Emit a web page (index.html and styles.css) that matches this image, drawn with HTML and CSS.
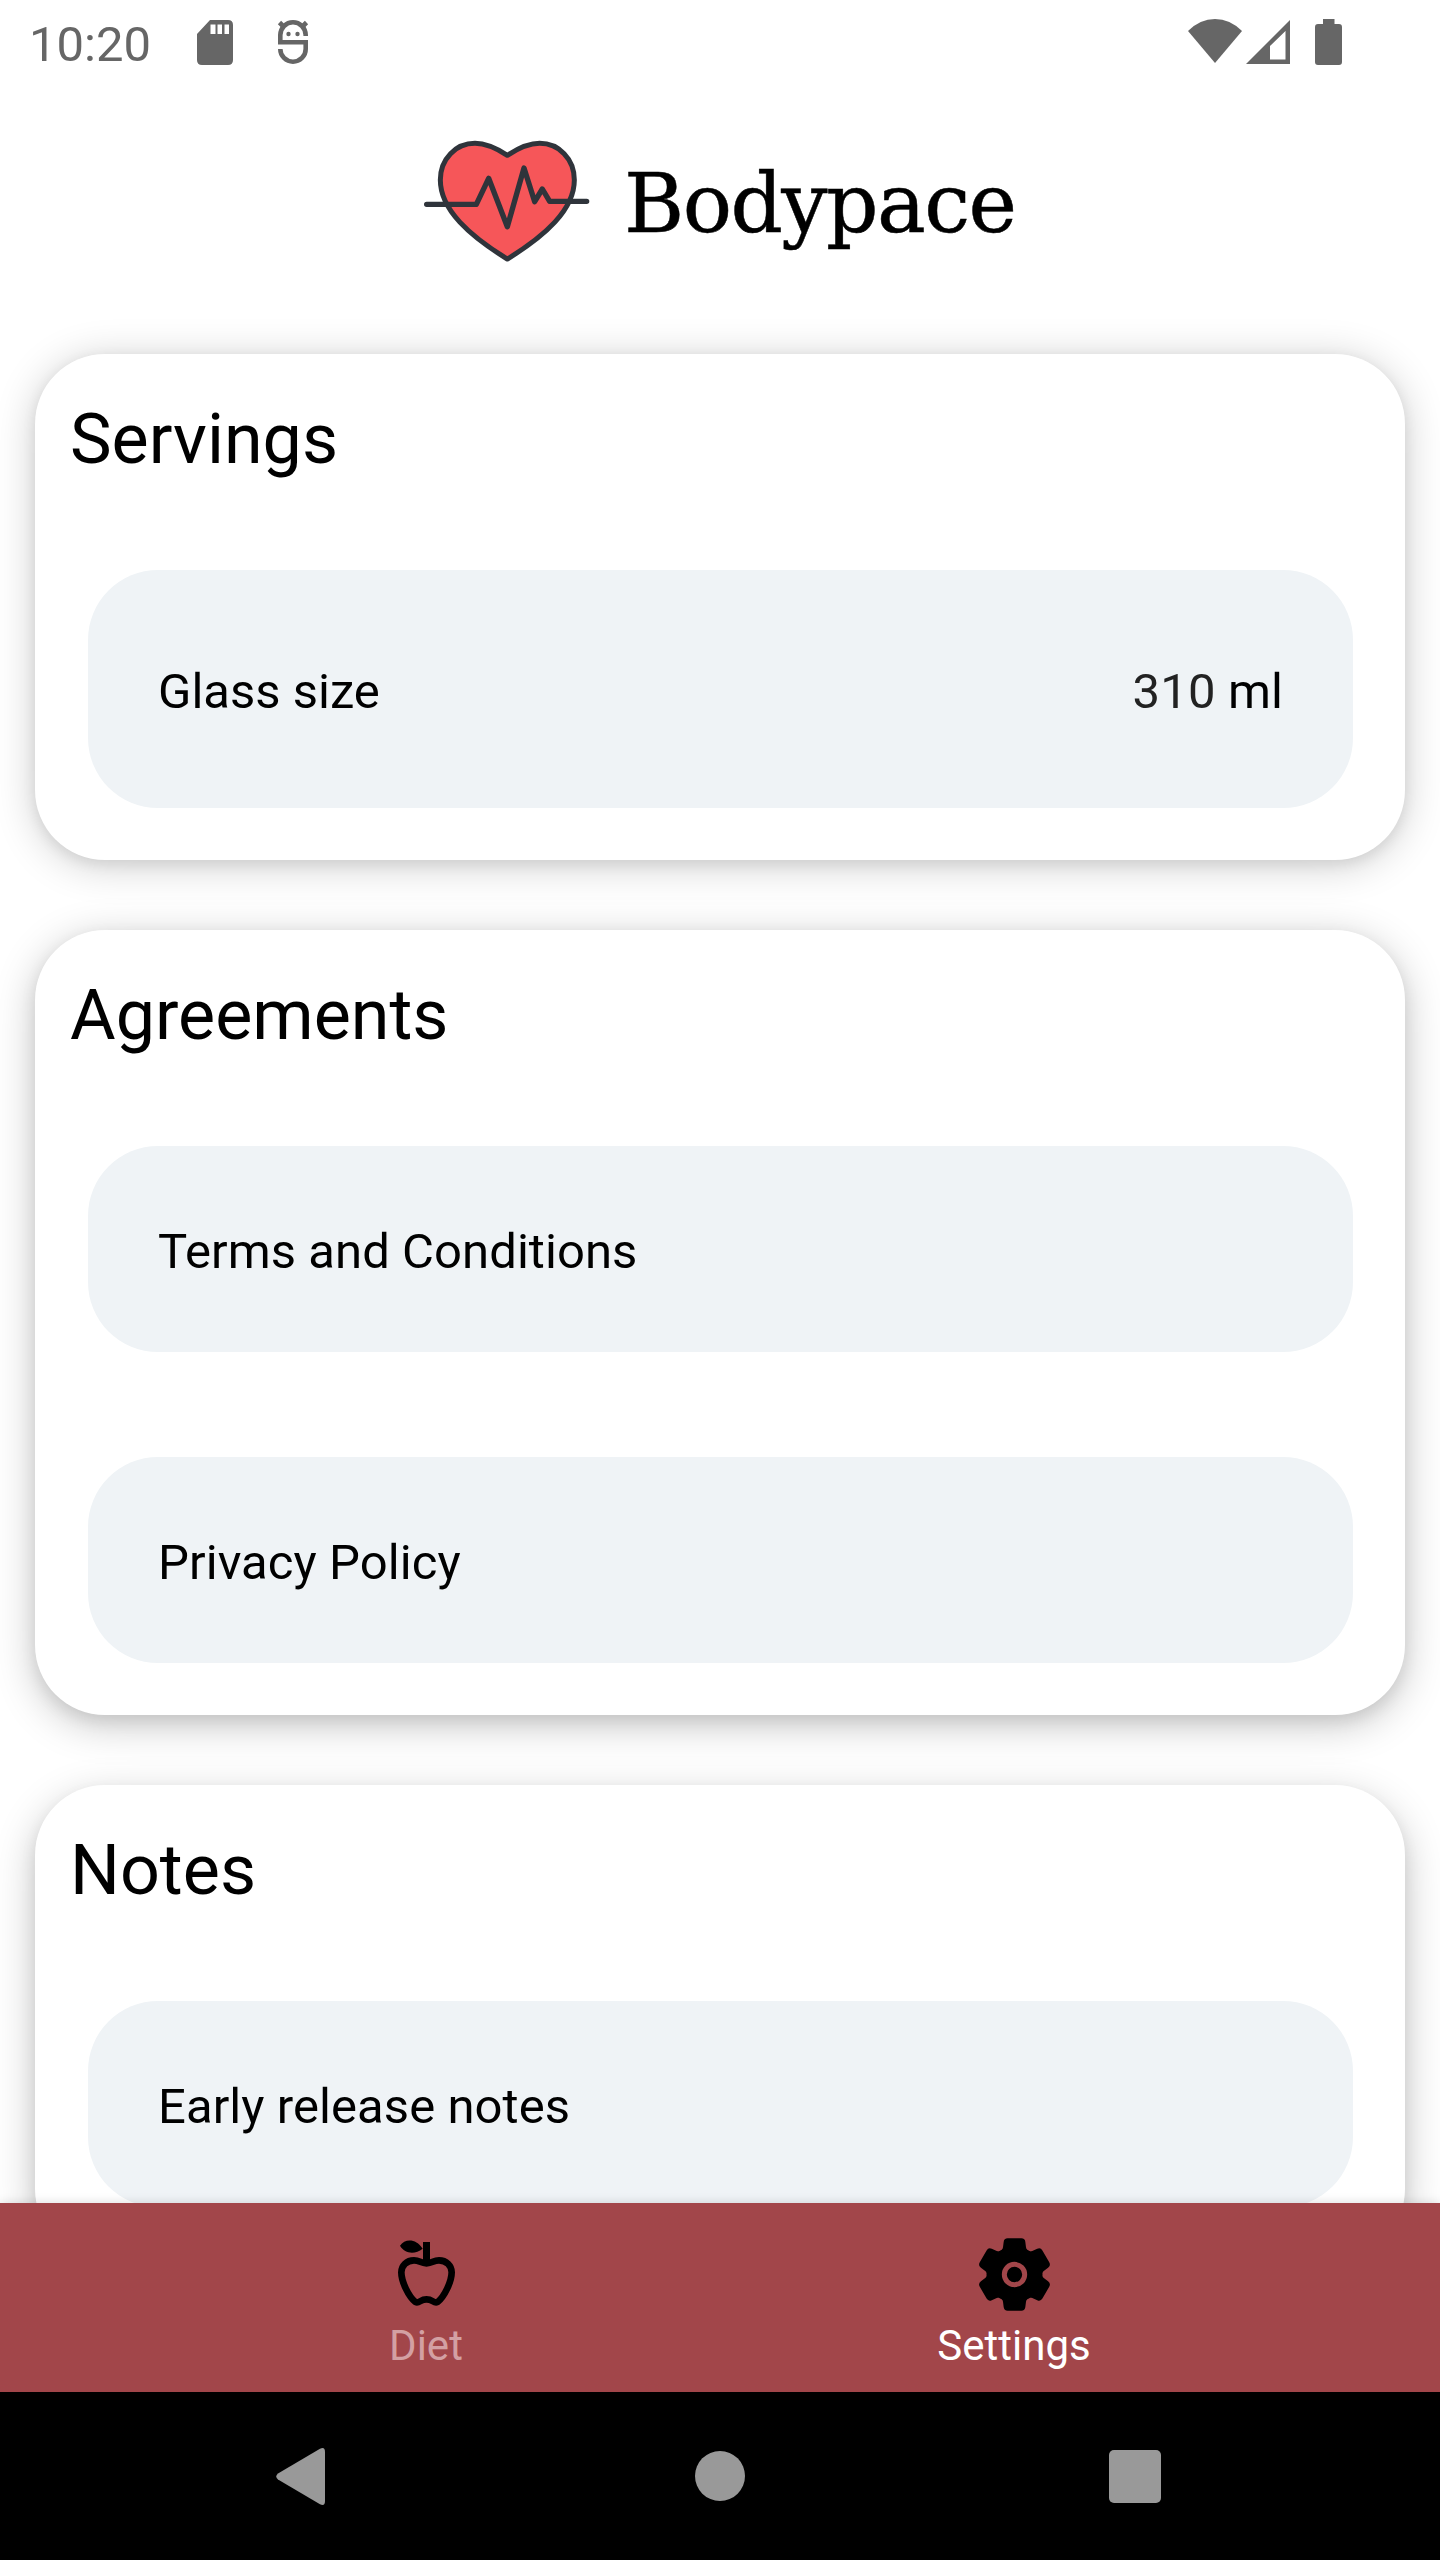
FILE: index.html
```html
<!DOCTYPE html>
<html lang="en">
<head>
<meta charset="utf-8">
<title>Bodypace</title>
<link rel="stylesheet" href="styles.css">
</head>
<body>
<div class="screen">
  <header class="status">
    <span class="clock">10:20</span>
    <svg class="sd" viewBox="0 0 36 45"><path fill-rule="evenodd" d="M13 0H31Q36 0 36 5V40Q36 45 31 45H5Q0 45 0 40V14ZM13.500 4.500V14H18.500V4.500ZM20.500 4.500V14H25V4.500ZM27.500 4.500V14H32V4.500Z"/></svg>
    <svg class="bot" viewBox="0 0 32 45"><g fill="none" stroke="#666" stroke-width="4.600"><path d="M28.700 16V15A12.700 12.700 0 0 0 3.300 15V22.300H28.700V29A12.700 12.700 0 0 1 3.300 29"/><path d="M2.500 2.500L7 7M29.500 2.500L25 7"/></g><circle cx="11.500" cy="14" r="2.200"/><circle cx="20.500" cy="14" r="2.200"/></svg>
    <span class="spacer"></span>
    <svg class="wifi" viewBox="0 0 54 45"><path d="M0 12Q12 0 27 0T54 12L27 44Z"/></svg>
    <svg class="signal" viewBox="0 0 44 44"><path fill-rule="evenodd" d="M44 0V44H0ZM39.500 11L24 26V39.500H39.500Z"/></svg>
    <svg class="battery" viewBox="0 0 27 46"><path d="M8 0H19.500V5H24Q27 5 27 8V43Q27 46 24 46H3Q0 46 0 43V8Q0 5 3 5H8Z"/></svg>
  </header>
  <div class="brand">
    <svg class="heart" viewBox="36 24 504 378">
      <path class="heart-shape" d="M292 76C255 52 225 40 195 40C138 40 91 86 91 150C91 240 180 318 292 387C404 318 493 240 493 150C493 86 446 40 389 40C359 40 329 52 292 76Z"/>
      <path class="pulse" d="M50 223H199L236 145L292 290L342 114L374 215L397 177L419 214H530"></path>
    </svg>
    <h1 class="name">Bodypace</h1>
  </div>
  <main class="content">
    <section class="card">
      <h2>Servings</h2>
      <div class="item tall"><span>Glass size</span><span class="value"><span class="number">310</span> ml</span></div>
    </section>
    <section class="card middle">
      <h2>Agreements</h2>
      <div class="item">Terms and Conditions</div>
      <div class="item">Privacy Policy</div>
    </section>
    <section class="card low">
      <h2>Notes</h2>
      <div class="item">Early release notes</div>
    </section>
  </main>
  <nav class="tabs">
    <a class="tab">
      <svg class="tab-icon" viewBox="132 126 252 252">
        <path fill="none" stroke="#000" stroke-width="20" stroke-linejoin="round" d="M259.500 220C241 220 240 211 222 211C200 211 184 227 184 247C184 275 206 320 226 336C239 341 240 328 259.500 328C279 328 280 341 293 336C313 320 335 275 335 247C335 227 319 211 297 211C279 211 278 220 259.500 220Z"/>
        <path d="M249 156H270V220H249ZM180 167C195 145 228 145 248 176C225 194 195 192 180 167Z"/>
      </svg>
      Diet
    </a>
    <a class="tab active">
      <svg class="tab-icon" viewBox="216 126 252 252">
        <defs><path id="tooth" d="M306 205L296 184Q307 184 309 172L311 156Q312 145 323 145H364Q375 145 376 156L378 172Q380 184 391 184L381 205Z"/></defs>
        <circle cx="343.500" cy="253.500" r="84"/>
        <use href="#tooth"/>
        <use href="#tooth" transform="rotate(60 343.500 253.500)"/>
        <use href="#tooth" transform="rotate(120 343.500 253.500)"/>
        <use href="#tooth" transform="rotate(180 343.500 253.500)"/>
        <use href="#tooth" transform="rotate(240 343.500 253.500)"/>
        <use href="#tooth" transform="rotate(300 343.500 253.500)"/>
        <circle class="hub" cx="343.500" cy="253.500" r="30.500"/>
      </svg>
      Settings
    </a>
  </nav>
  <footer class="system">
    <svg class="back" viewBox="0 0 49 57"><path d="M44 .8Q49-1.500 49 4V53Q49 58.500 44 56.200L2 31.500Q-1.500 28.500 2 25.500Z"/></svg>
    <span class="home"></span>
    <span class="recents"></span>
  </footer>
</div>
</body>
</html>
```
FILE: styles.css
```css
* { box-sizing: border-box; }
body { margin: 0; background: #fff; font-family: Roboto, sans-serif; color: #000; }
.screen { width: 1440px; height: 2560px; display: flex; flex-direction: column; overflow: hidden; }
.status { height: 84px; display: flex; align-items: flex-start; padding: 19px 98px 0 29px; fill: #666; flex: none; }
.clock { font-size: 49px; line-height: 52px; color: #666; width: 168px; }
.sd { width: 36px; height: 45px; margin: 1px 44px 0 0; }
.bot { width: 32px; height: 45px; margin-top: 1px; }
.spacer { flex: 1; }
.wifi { width: 54px; height: 45px; margin-right: 4px; }
.signal { width: 44px; height: 44px; margin: 1px 25px 0 0; }
.battery { width: 27px; height: 46px; }
.brand { height: 270px; flex: none; display: flex; padding: 54px 0 0 422px; gap: 34px; }
.heart { width: 168px; height: 126px; }
.heart-shape { fill: #f65659; stroke: #2f343b; stroke-width: 15; stroke-linejoin: round; }
.pulse { fill: none; stroke: #2f343b; stroke-width: 16; stroke-linecap: round; stroke-linejoin: round; }
.name { margin: 0; font: 400 82px/132px "DejaVu Serif", serif; letter-spacing: -1.6px; -webkit-text-stroke: .5px #000; }
.content { flex: 1; min-height: 0; overflow: hidden; margin-top: -70px; padding: 70px 35px 0; display: flex; flex-direction: column; gap: 70px; }
.card { flex: none; border-radius: 70px; padding: 44px 52px 52px 53px; background: #fff; box-shadow: 0 5px 42px rgba(0,0,0,.2), 0 4px 14px rgba(0,0,0,.08); }
.middle { box-shadow: 0 9px 42px rgba(0,0,0,.23), 0 6px 16px rgba(0,0,0,.08); }
.low { box-shadow: 0 13px 42px rgba(0,0,0,.23), 0 8px 16px rgba(0,0,0,.08); }
h2 { margin: 0 0 90px -18px; font-size: 70px; line-height: 82px; font-weight: 400; }
.item { height: 206px; border-radius: 70px; background: #eff3f6; padding: 4px 70px 0; display: flex; align-items: center; justify-content: space-between; font-size: 49px; letter-spacing: .07px; }
.item + .item { margin-top: 105px; }
.tall { height: 238px; letter-spacing: 0; }
.value { white-space: pre; }
.number { color: #222; letter-spacing: .3px; }
.tabs { height: 189px; flex: none; background: #a2464a; display: flex; padding: 0 132px; position: relative; box-shadow: 0 0 10px rgba(0,0,0,.14); }
.tab { flex: 1; display: flex; flex-direction: column; align-items: center; padding-top: 29px; color: #d3a0a3; font-size: 42px; line-height: 60px; }
.tab-icon { width: 84px; height: 84px; fill: #000; }
.hub { fill: none; stroke: #a2464a; stroke-width: 15; }
.active { color: #fff; }
.system { height: 168px; flex: none; background: #000; position: relative; display: flex; align-items: center; padding-left: 276px; }
.back { width: 49px; height: 57px; fill: #999; margin-right: 370px; }
.home { width: 50px; height: 50px; border-radius: 50%; background: #999; margin-right: 364px; }
.recents { width: 52px; height: 53px; border-radius: 5px; background: #999; }
```
